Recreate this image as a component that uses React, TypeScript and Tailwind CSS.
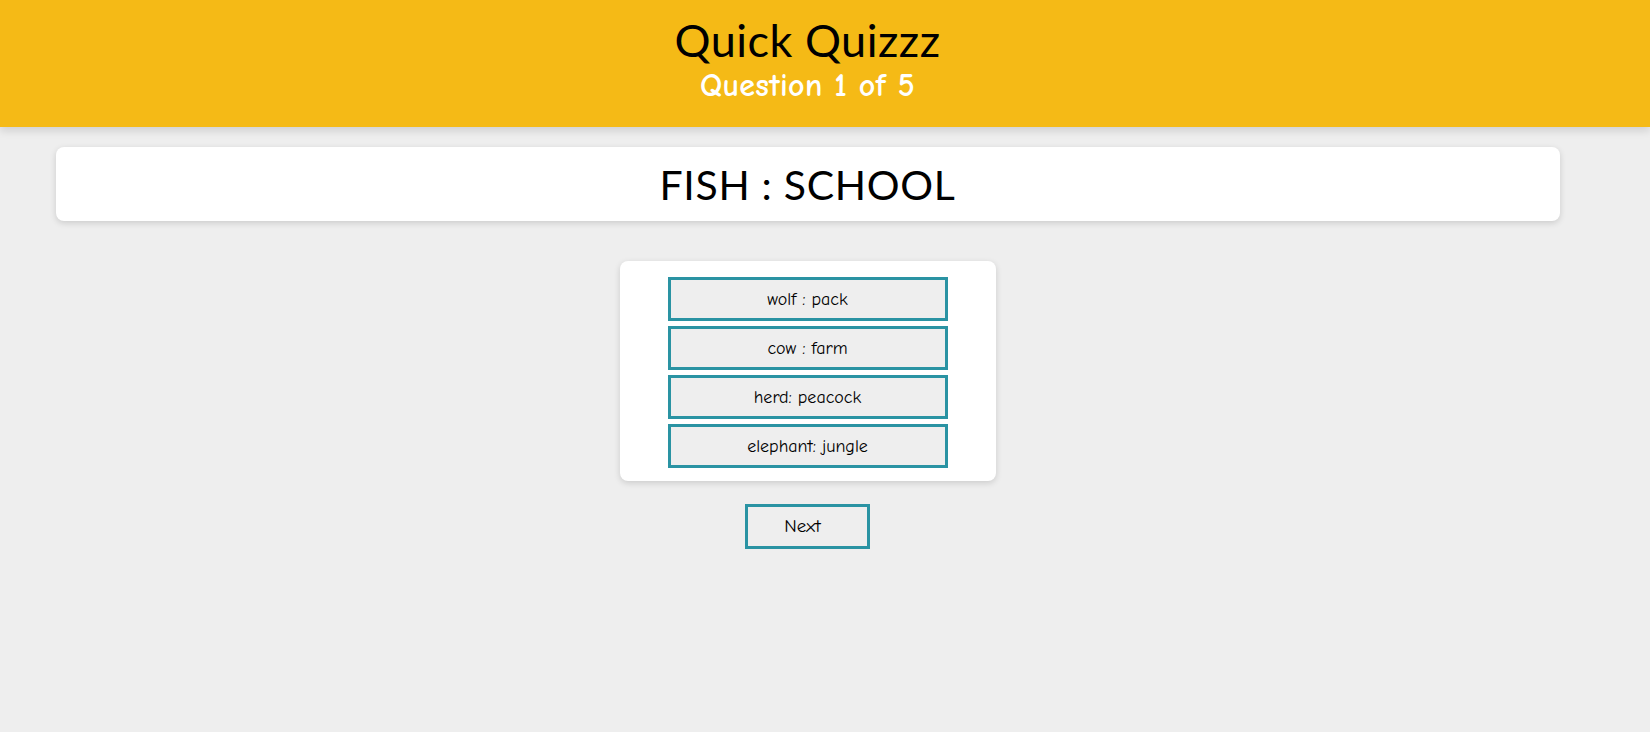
const opciones = ["wolf : pack", "cow : farm", "herd: peacock", "elephant: jungle"];

const comic = { fontFamily: '"Comic Sans MS", "Comic Neue", Lato, "Noto Sans", sans-serif' };

export default function App() {
  return (
    <div className="min-h-screen w-full bg-[#eeeeee]">
      <header className="h-[127px] w-full bg-[#f5ba16] shadow-[0_4px_8px_rgba(0,0,0,0.12)]">
        <div className="flex w-[1615px] flex-col items-center pt-[14px]">
          <h1 className="font-['Lato',sans-serif] text-[45px] leading-[52px] font-normal tracking-[0.5px] text-black">
            Quick Quizzz
          </h1>
          <p className="mt-[1px] text-[32px] leading-[38px] font-bold tracking-[0.3px] text-white" style={comic}>
            Question 1 of 5
          </p>
        </div>
      </header>

      <main className="flex w-[1615px] flex-col items-center pt-[20px]">
        <div className="flex h-[74px] w-[1504px] items-center justify-center rounded-lg bg-white shadow-[0_2px_6px_rgba(0,0,0,0.15)]">
          <h2 className="font-['Lato',sans-serif] text-[41px] leading-none font-normal tracking-[0.7px] text-black">
            FISH : SCHOOL
          </h2>
        </div>

        <div className="mt-[40px] flex w-[376px] flex-col items-center gap-[5px] rounded-lg bg-white pt-[16px] pb-[13px] shadow-[0_2px_6px_rgba(0,0,0,0.15)]">
          {opciones.map((o) => (
            <button
              key={o}
              className="h-[44px] w-[280px] border-[3px] border-[#2a93a3] bg-[#eeeeee] text-[18px] text-black"
              style={comic}
            >
              {o}
            </button>
          ))}
        </div>

        <button
          className="mt-[23px] h-[45px] w-[125px] border-[3px] border-[#2a93a3] bg-[#eeeeee] pr-[10px] text-[19px] text-black"
          style={comic}
        >
          Next
        </button>
      </main>
    </div>
  );
}
